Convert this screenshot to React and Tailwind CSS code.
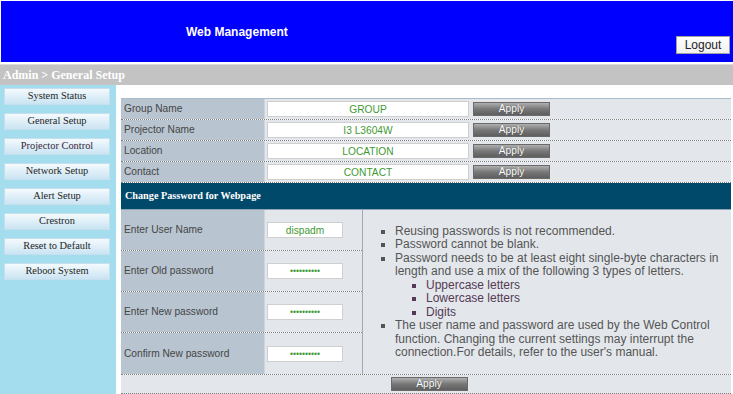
import React from 'react';

const sans = "font-['Liberation_Sans',Arial,sans-serif]";
const serif = "font-['Liberation_Serif','Times_New_Roman',serif]";

const menu = [
  'System Status',
  'General Setup',
  'Projector Control',
  'Network Setup',
  'Alert Setup',
  'Crestron',
  'Reset to Default',
  'Reboot System',
];

const infoRows = [
  { label: 'Group Name', value: 'GROUP' },
  { label: 'Projector Name', value: 'I3 L3604W' },
  { label: 'Location', value: 'LOCATION' },
  { label: 'Contact', value: 'CONTACT' },
];

const pwRows = [
  { label: 'Enter User Name', value: 'dispadm', type: 'text' },
  { label: 'Enter Old password', value: '1234567890', type: 'password' },
  { label: 'Enter New password', value: '1234567890', type: 'password' },
  { label: 'Confirm New password', value: '1234567890', type: 'password' },
];

const ApplyButton = ({ className = '' }) => (
  <button
    className={`h-[14px] w-[77px] border border-[#6a6a6a] bg-linear-to-b from-[#b0b0b0] via-[#787878] to-[#5e5e5e] text-[10.2px] leading-none text-white [text-shadow:0_0_1px_#444] ${sans} ${className}`}
  >
    Apply
  </button>
);

export default function App() {
  return (
    <div className={`w-[733px] h-[394px] overflow-hidden bg-white ${sans}`}>
      {/* Cabecera */}
      <header className="ml-[1px] mt-[1px] h-[61px] bg-[#0000ff] flex justify-between">
        <h1 className="pl-[185px] pt-[24px] text-[12px] font-bold text-white leading-[14px]">
          Web Management
        </h1>
        <button className="self-end mb-[8px] mr-[3px] h-[18px] w-[54px] border border-[#a0a0a0] bg-linear-to-b from-white to-[#f0f0f0] text-[12px] leading-none text-[#222]">
          Logout
        </button>
      </header>

      {/* Ruta */}
      <div className={`mt-[2px] h-[21px] border-t border-[#dcdcdc] bg-[#c3c3c3] pl-[3px] pt-[2px] text-[12px] font-bold leading-[16px] text-white ${serif}`}>
        Admin &gt; General Setup
      </div>

      <div className="flex h-[310px]">
        {/* Menú lateral */}
        <nav className="w-[116px] shrink-0 bg-[#a4deee] pl-[4px] pt-[3px] flex flex-col gap-[8px]">
          {menu.map((item) => (
            <button
              key={item}
              className={`h-[17px] w-[106px] border border-[#c6dfec] bg-linear-to-b from-[#f4fafd] to-[#cae4f3] text-[10.4px] leading-none ${serif} ${
                item === 'Projector Control' ? 'text-[#3a1f3a]' : 'text-[#262626]'
              }`}
            >
              {item}
            </button>
          ))}
        </nav>

        {/* Contenido */}
        <main className="flex-1 pl-[5px] pr-[2px] pt-[13px]">
          <div className="border-t border-[#a9bccb]">
            {infoRows.map((row) => (
              <div key={row.label} className="flex h-[21px] border-b border-dotted border-[#7d7d7d]">
                <div className="w-[143px] shrink-0 bg-[#b8c4d0] pl-[3px] flex items-center text-[10.2px] text-[#464646]">
                  {row.label}
                </div>
                <div className="flex-1 border-l border-[#cdd5dc] bg-[#e3e7eb] pl-[2px] flex items-center gap-[4px]">
                  <input
                    readOnly
                    value={row.value}
                    className="h-[16px] w-[202px] border border-[#cfcfcf] bg-white text-center text-[10.2px] text-[#3f9a33] outline-none"
                  />
                  <ApplyButton />
                </div>
              </div>
            ))}

            <div className={`h-[27px] border-b border-[#8ea4b3] bg-[#01496a] pl-[4px] flex items-center text-[10.2px] font-bold text-white ${serif}`}>
              Change Password for Webpage
            </div>

            <div className="flex border-b border-dotted border-[#7d7d7d]">
              <div className="w-[241px] shrink-0">
                {pwRows.map((row, i) => (
                  <div
                    key={row.label}
                    className={`flex h-[41px] ${i < pwRows.length - 1 ? 'border-b border-dotted border-[#7d7d7d]' : ''}`}
                  >
                    <div className="w-[143px] shrink-0 bg-[#b8c4d0] pl-[3px] flex items-center text-[10.2px] text-[#464646]">
                      {row.label}
                    </div>
                    <div className="flex-1 border-l border-[#cdd5dc] bg-[#e3e7eb] pl-[2px] flex items-center">
                      <input
                        readOnly
                        type={row.type}
                        value={row.value}
                        className={`h-[16px] w-[76px] border border-[#cfcfcf] bg-white text-center text-[#3f9a33] outline-none ${
                          row.type === 'password' ? 'text-[8.5px]' : 'text-[10.2px]'
                        }`}
                      />
                    </div>
                  </div>
                ))}
              </div>

              <div className="flex-1 border-l border-[#9eabb8] bg-[#e3e7eb] flex items-center pr-[4px]">
                <ul className="list-[square] pl-[32px] text-[12px] leading-[13.5px] text-[#555]">
                  <li>Reusing passwords is not recommended.</li>
                  <li>Password cannot be blank.</li>
                  <li>
                    Password needs to be at least eight single-byte characters in length and use a mix of the
                    following 3 types of letters.
                    <ul className="list-[square] pl-[31px] text-[#553a55]">
                      <li>Uppercase letters</li>
                      <li>Lowercase letters</li>
                      <li>Digits</li>
                    </ul>
                  </li>
                  <li>
                    The user name and password are used by the Web Control function. Changing the current
                    settings may interrupt the connection.For details, refer to the user's manual.
                  </li>
                </ul>
              </div>
            </div>

            <div className="h-[19px] border-b border-dotted border-[#7d7d7d] bg-[#e3e7eb] flex items-center justify-center pl-[6px]">
              <ApplyButton />
            </div>
          </div>
        </main>
      </div>
    </div>
  );
}
